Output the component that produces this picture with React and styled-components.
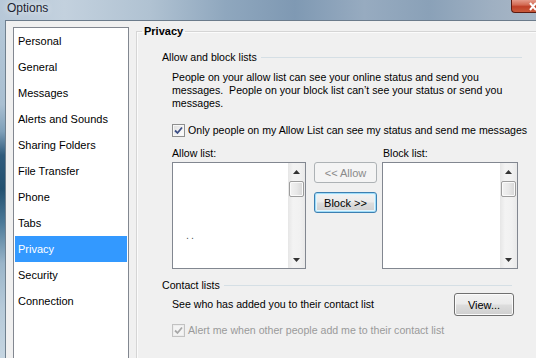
import React from 'react';
import styled, { createGlobalStyle, css } from 'styled-components';

const GlobalStyle = createGlobalStyle`
  html, body { margin: 0; padding: 0; width: 536px; height: 358px; overflow: hidden; background: #f0f0f0; }
  body { font-family: "Liberation Sans", Arial, sans-serif; font-size: 10.6px; color: #000; }
  #root { height: 100%; }
`;

const Window = styled.div`
  width: 536px;
  height: 358px;
  display: flex;
  flex-direction: column;
  overflow: hidden;
`;

const TitleBar = styled.div`
  height: 20px;
  flex: none;
  display: flex;
  justify-content: space-between;
  align-items: flex-start;
  background: linear-gradient(90deg, #b7c8d8 0%, #c3d1de 12%, #b0c2d2 28%, #8fa7be 42%, #7f99b3 55%, #97abc0 68%, #8aa1b8 80%, #9fb0c2 92%, #a9b7c6 100%);
`;

const Title = styled.div`
  padding: 1px 0 0 7px;
  font-size: 12px;
  line-height: 14px;
  color: #1c2330;
  text-shadow: 0 0 6px rgba(255, 255, 255, 0.9);
`;

const CloseButton = styled.div`
  width: 24px;
  height: 12px;
  margin-top: -1px;
  border: 1px solid #5d1a10;
  border-right: none;
  border-radius: 0 0 0 4px;
  background: linear-gradient(#e59a8a 0%, #d36b54 40%, #c04028 55%, #c95a3b 100%);
  display: flex;
  justify-content: flex-end;
  align-items: center;
`;

const Main = styled.div`
  flex: 1;
  min-height: 0;
  display: flex;
`;

const GlassEdge = styled.div`
  width: 5px;
  flex: none;
  background: linear-gradient(180deg, #b4c7d7 0%, #a9bfd1 25%, #7fa0b9 33%, #2f5b7c 40%, #22506f 50%, #4b7998 60%, #9ab5c9 72%, #b6cad9 85%, #c5d5e1 100%);
`;

const Body = styled.div`
  flex: 1;
  min-width: 0;
  display: flex;
  background: #f0f0f0;
  border-top: 1px solid #6b7b8b;
  border-left: 1px solid #70818f;
  padding: 6px 0 0 7px;
  overflow: hidden;
`;

const NavList = styled.ul`
  list-style: none;
  margin: 0 0 -20px 0;
  padding: 0 1px;
  width: 112px;
  flex: none;
  background: #fff;
  border: 1px solid #828790;
  font-size: 11px;
`;

const NavItem = styled.li`
  height: 26px;
  line-height: 26px;
  padding-left: 3px;
  color: #000;
  ${p => p.$selected && css`
    background: #3399ff;
    color: #fff;
  `}
`;

const Panel = styled.fieldset`
  flex: 1;
  min-width: 0;
  margin: -2px 0 0 7px;
  padding: 0;
  border: none;
  border-top: 1px solid #d5d5d5;
  border-left: 1px solid #d5d5d5;
  box-shadow: inset 1px 1px 0 #fbfbfb;
`;

const PanelTitle = styled.legend`
  margin-left: 5px;
  padding: 0 2px;
  font-weight: bold;
  font-size: 11px;
  line-height: 13px;
`;

const PanelContent = styled.div`
  padding: 0 14px 0 25px;
`;

const SectionHeader = styled.div`
  display: flex;
  align-items: center;
  gap: 4px;
  line-height: 13px;
  margin-top: ${p => p.$top}px;
  margin-right: ${p => p.$right || 0}px;
  &::after {
    content: "";
    flex: 1;
    height: 1px;
    background: #d5dfe5;
  }
`;

const Paragraph = styled.p`
  margin: 7px 0 0 10px;
  line-height: 13px;
  white-space: pre-wrap;
`;

const CheckRow = styled.label`
  display: flex;
  align-items: center;
  gap: 3px;
  margin: ${p => p.$top}px 0 0 10px;
  line-height: 13px;
  white-space: nowrap;
  color: ${p => (p.$disabled ? '#9a9a9a' : '#000')};
`;

const CheckBox = styled.span`
  width: 11px;
  height: 11px;
  flex: none;
  display: flex;
  align-items: center;
  justify-content: center;
  border: 1px solid ${p => (p.$disabled ? '#c2c2c2' : '#8e8f8f')};
  background: ${p => (p.$disabled ? '#f4f4f4' : 'linear-gradient(135deg, #dcdcdc 0%, #f4f4f4 60%, #fdfdfd 100%)')};
  box-shadow: inset 0 0 0 1px ${p => (p.$disabled ? '#ececec' : '#f7f7f7')};
`;

const ListsGrid = styled.div`
  display: grid;
  grid-template-columns: 134px 63px 135px;
  grid-template-rows: 13px 107px;
  column-gap: 7px;
  row-gap: 2px;
  margin: 10px 0 0 10px;
`;

const ListLabel = styled.div`
  line-height: 13px;
  grid-column: ${p => p.$col};
`;

const ListBox = styled.div`
  display: flex;
  background: #fff;
  border: 1px solid #828790;
  grid-row: 2;
  grid-column: ${p => p.$col};
  ${p => p.$col === 3 && css`margin-left: -1px;`}
`;

const ListContent = styled.div`
  flex: 1;
  padding: 66px 0 0 13px;
  color: #555;
  letter-spacing: 2px;
`;

const ScrollBar = styled.div`
  width: 17px;
  flex: none;
  display: flex;
  flex-direction: column;
  background: linear-gradient(90deg, #e6e6e6 0%, #f3f3f3 30%, #f1f1f1 70%, #e9e9e9 100%);
`;

const ScrollArrow = styled.div`
  height: 17px;
  display: flex;
  align-items: center;
  justify-content: center;
  margin-top: ${p => (p.$down ? 'auto' : '0')};
`;

const ScrollThumb = styled.div`
  height: 14px;
  margin: 1px 1px 0 1px;
  border: 1px solid #9d9d9d;
  border-radius: 2px;
  background: linear-gradient(90deg, #f2f2f2 0%, #e8e8e8 50%, #d6d6d6 100%);
  box-shadow: inset 0 0 0 1px #fafafa;
`;

const ButtonColumn = styled.div`
  grid-row: 2;
  grid-column: 2;
  display: flex;
  flex-direction: column;
  gap: 9px;
  margin-left: 1px;
`;

const Button = styled.button`
  font-family: inherit;
  font-size: 11px;
  width: ${p => p.$w}px;
  height: ${p => p.$h}px;
  padding: 0;
  border: 1px solid #707070;
  border-radius: 3px;
  color: #000;
  background: linear-gradient(#f2f2f2 0%, #ebebeb 48%, #dddddd 52%, #cfcfcf 100%);
  box-shadow: inset 0 0 0 1px #fbfbfb;
  ${p => p.$focused && css`
    border-color: #3c7fb1;
    box-shadow: inset 0 0 0 1px #9fdcf8, inset 0 0 0 2px #e4f4fc;
  `}
  ${p => p.disabled && css`
    border-color: #adb2b5;
    background: #f4f4f4;
    color: #8a8a8a;
    box-shadow: none;
  `}
`;

const InfoRow = styled.div`
  display: flex;
  align-items: center;
  justify-content: space-between;
  margin: 1px 8px 0 10px;
  line-height: 13px;
`;

const Arrow = ({ down }) => (
  <svg width="7" height="4" viewBox="0 0 7 4">
    {down ? <path d="M0 0h7L3.5 4z" fill="#333" /> : <path d="M0 4h7L3.5 0z" fill="#333" />}
  </svg>
);

const Check = ({ color }) => (
  <svg width="9" height="9" viewBox="0 0 9 9">
    <path d="M1 4.5 L3.5 7 L8 1.5" fill="none" stroke={color} strokeWidth="1.8" />
  </svg>
);

const Scroll = () => (
  <ScrollBar>
    <ScrollArrow><Arrow /></ScrollArrow>
    <ScrollThumb />
    <ScrollArrow $down><Arrow down /></ScrollArrow>
  </ScrollBar>
);

const navItems = [
  'Personal', 'General', 'Messages', 'Alerts and Sounds', 'Sharing Folders',
  'File Transfer', 'Phone', 'Tabs', 'Privacy', 'Security', 'Connection',
];

export default function App() {
  return (
    <>
      <GlobalStyle />
      <Window>
        <TitleBar>
          <Title>Options</Title>
          <CloseButton>
            <svg width="10" height="9" viewBox="0 0 10 9">
              <path d="M4 1 L10 8 M10 1 L4 8" stroke="#fff" strokeWidth="2" />
            </svg>
          </CloseButton>
        </TitleBar>
        <Main>
          <GlassEdge />
          <Body>
            <NavList>
              {navItems.map(item => (
                <NavItem key={item} $selected={item === 'Privacy'}>{item}</NavItem>
              ))}
            </NavList>
            <Panel>
              <PanelTitle>Privacy</PanelTitle>
              <PanelContent>
                <SectionHeader $top={13}>Allow and block lists</SectionHeader>
                <Paragraph>
                  People on your allow list can see your online status and send you
                  <br />
                  {'messages.  People on your block list can\u2019t see your status or send you'}
                  <br />
                  messages.
                </Paragraph>
                <CheckRow $top={14}>
                  <CheckBox><Check color="#3d4f86" /></CheckBox>
                  Only people on my Allow List can see my status and send me messages
                </CheckRow>
                <ListsGrid>
                  <ListLabel $col={1}>Allow list:</ListLabel>
                  <ListLabel $col={3}>Block list:</ListLabel>
                  <ListBox $col={1}>
                    <ListContent>..</ListContent>
                    <Scroll />
                  </ListBox>
                  <ButtonColumn>
                    <Button $w={63} $h={21} disabled>&lt;&lt; Allow</Button>
                    <Button $w={63} $h={21} $focused>Block &gt;&gt;</Button>
                  </ButtonColumn>
                  <ListBox $col={3}>
                    <ListContent />
                    <Scroll />
                  </ListBox>
                </ListsGrid>
                <SectionHeader $top={10} $right={10}>Contact lists</SectionHeader>
                <InfoRow>
                  <span>See who has added you to their contact list</span>
                  <Button $w={60} $h={23}>View...</Button>
                </InfoRow>
                <CheckRow $top={8} $disabled>
                  <CheckBox $disabled><Check color="#a8a8a8" /></CheckBox>
                  Alert me when other people add me to their contact list
                </CheckRow>
              </PanelContent>
            </Panel>
          </Body>
        </Main>
      </Window>
    </>
  );
}
